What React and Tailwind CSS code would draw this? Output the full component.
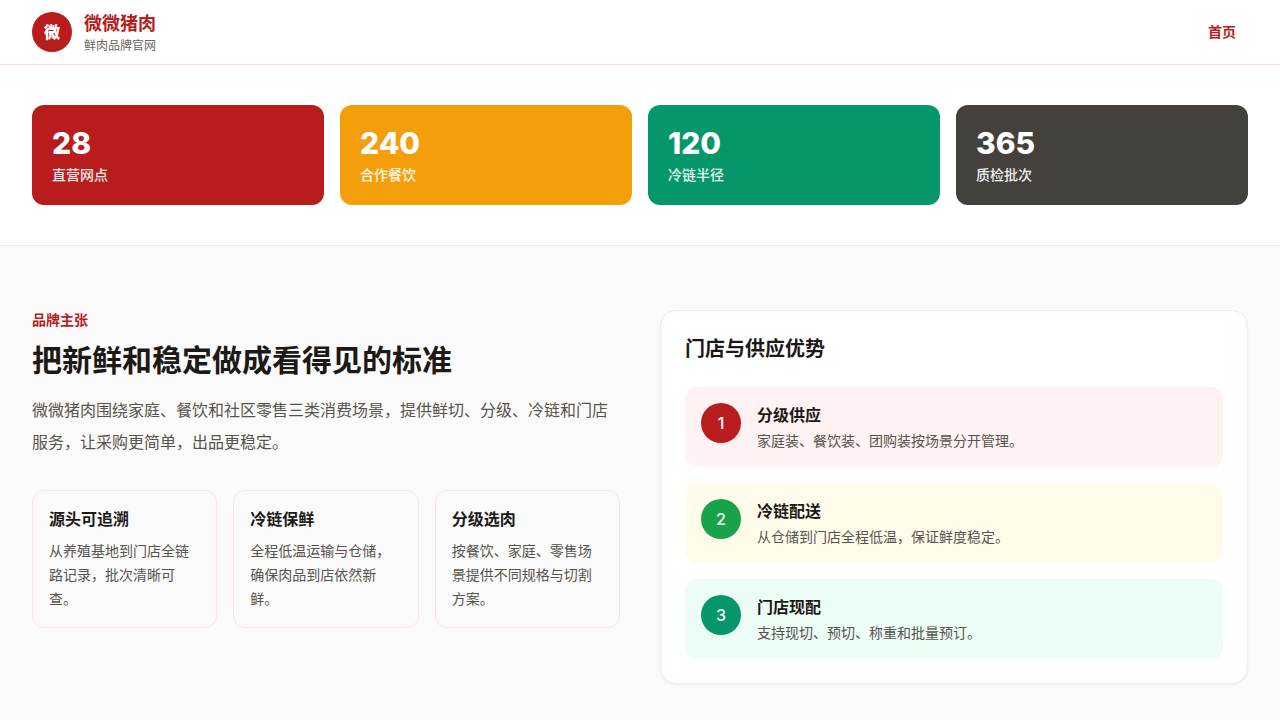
const stats = [
  { value: "28", label: "直营网点", color: "bg-[#b91c1c]" },
  { value: "240", label: "合作餐饮", color: "bg-[#f59e0b]" },
  { value: "120", label: "冷链半径", color: "bg-[#059669]" },
  { value: "365", label: "质检批次", color: "bg-[#44403c]" },
];

const features = [
  { title: "源头可追溯", text: "从养殖基地到门店全链路记录，批次清晰可查。" },
  { title: "冷链保鲜", text: "全程低温运输与仓储，确保肉品到店依然新鲜。" },
  { title: "分级选肉", text: "按餐饮、家庭、零售场景提供不同规格与切割方案。" },
];

const advantages = [
  { title: "分级供应", text: "家庭装、餐饮装、团购装按场景分开管理。", row: "bg-[#fef2f2]", badge: "bg-[#b91c1c]" },
  { title: "冷链配送", text: "从仓储到门店全程低温，保证鲜度稳定。", row: "bg-[#fffbeb]", badge: "bg-[#16a34a]" },
  { title: "门店现配", text: "支持现切、预切、称重和批量预订。", row: "bg-[#ecfdf5]", badge: "bg-[#059669]" },
];

function Header() {
  return (
    <header className="border-b border-[#fbdde3] bg-white">
      <div className="mx-auto flex h-16 max-w-7xl items-center justify-between px-8">
        <a href="#" className="flex items-center gap-3">
          <span className="flex size-10 items-center justify-center rounded-full bg-[#b91c1c] font-black text-white">微</span>
          <span className="block">
            <span className="block text-lg leading-7 font-bold text-[#b91c1c]">微微猪肉</span>
            <span className="block text-xs leading-4 text-[#6b6560]">鲜肉品牌官网</span>
          </span>
        </a>
        <nav>
          <a href="#" className="block px-3 py-2 text-sm font-semibold text-[#b91c1c]">首页</a>
        </nav>
      </div>
    </header>
  );
}

export default function App() {
  return (
    <div className="min-h-screen bg-[#fafafa] font-['Inter','Noto_Sans_CJK_SC',sans-serif] text-[#1c1917] antialiased">
      <Header />
      <section className="border-b border-[#f3e8ea] bg-white">
        <div className="mx-auto grid max-w-7xl grid-cols-4 gap-4 px-8 py-10">
          {stats.map((s) => (
            <div key={s.label} className={`rounded-xl p-5 text-white ${s.color}`}>
              <div className="text-3xl font-extrabold">{s.value}</div>
              <div className="mt-1 text-sm font-medium text-white/90">{s.label}</div>
            </div>
          ))}
        </div>
      </section>
      <main className="mx-auto grid max-w-7xl grid-cols-2 gap-10 px-8 py-16">
        <section>
          <p className="text-sm font-semibold text-[#b91c1c]">品牌主张</p>
          <h1 className="mt-3 text-3xl font-bold">把新鲜和稳定做成看得见的标准</h1>
          <p className="mt-4 text-base leading-8 text-[#57534e]">微微猪肉围绕家庭、餐饮和社区零售三类消费场景，提供鲜切、分级、冷链和门店服务，让采购更简单，出品更稳定。</p>
          <div className="mt-8 grid grid-cols-3 gap-4">
            {features.map((f) => (
              <article key={f.title} className="rounded-xl border border-[#ffe4e6] p-4">
                <h3 className="font-semibold">{f.title}</h3>
                <p className="mt-2 text-sm leading-6 text-[#57534e]">{f.text}</p>
              </article>
            ))}
          </div>
        </section>
        <section className="rounded-2xl border border-[#ffe4e6] bg-white p-6 shadow-xs">
          <h2 className="text-xl font-semibold">门店与供应优势</h2>
          <ol className="mt-6 space-y-4">
            {advantages.map((a, i) => (
              <li key={a.title} className={`flex gap-4 rounded-xl p-4 ${a.row}`}>
                <span className={`flex size-10 shrink-0 items-center justify-center rounded-full font-medium text-white ${a.badge}`}>{i + 1}</span>
                <div>
                  <h3 className="font-semibold">{a.title}</h3>
                  <p className="mt-1 text-sm text-[#57534e]">{a.text}</p>
                </div>
              </li>
            ))}
          </ol>
        </section>
      </main>
    </div>
  );
}
